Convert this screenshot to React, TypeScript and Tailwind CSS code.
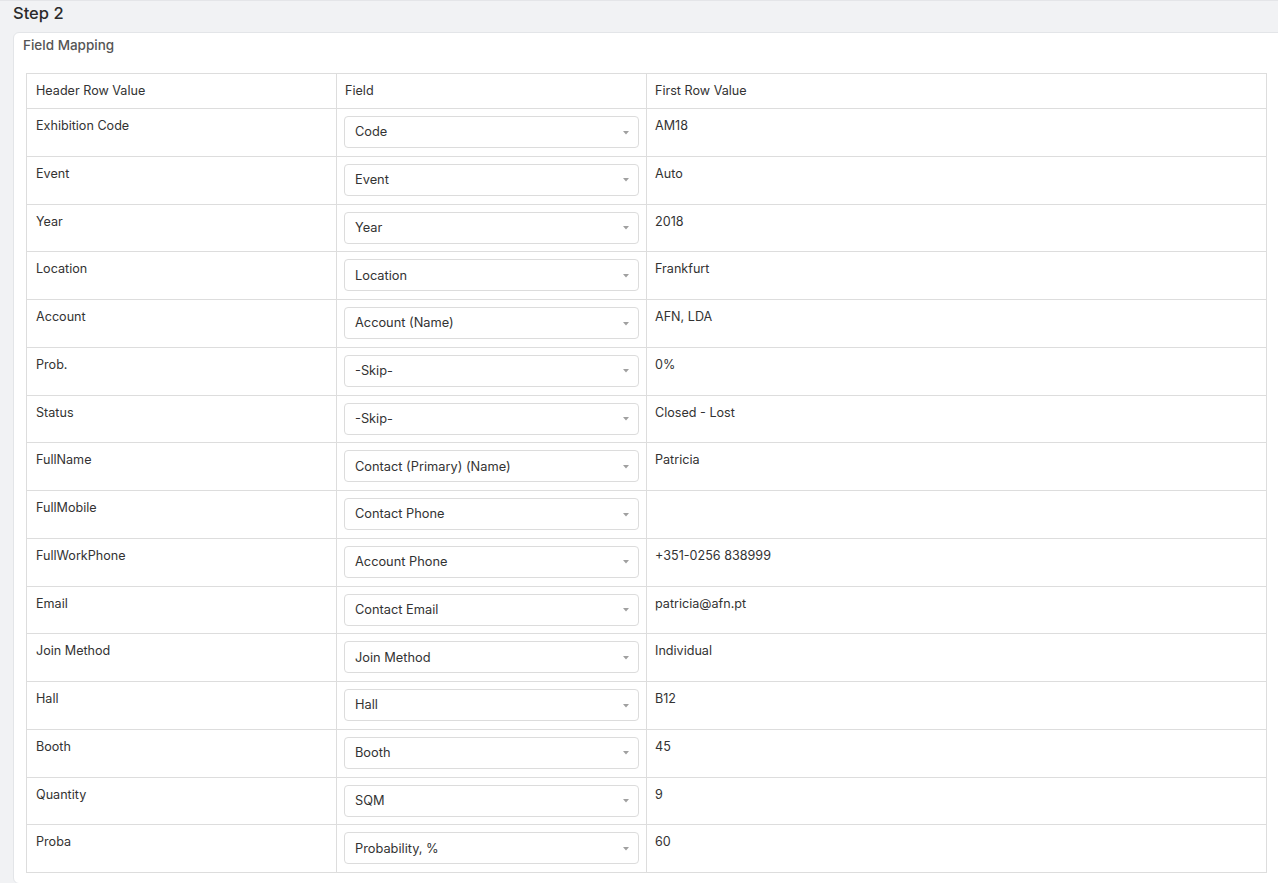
import React from "react";

const rows: [string, string, string][] = [
  ["Exhibition Code", "Code", "AM18"],
  ["Event", "Event", "Auto"],
  ["Year", "Year", "2018"],
  ["Location", "Location", "Frankfurt"],
  ["Account", "Account (Name)", "AFN, LDA"],
  ["Prob.", "-Skip-", "0%"],
  ["Status", "-Skip-", "Closed - Lost"],
  ["FullName", "Contact (Primary) (Name)", "Patricia"],
  ["FullMobile", "Contact Phone", ""],
  ["FullWorkPhone", "Account Phone", "+351-0256 838999"],
  ["Email", "Contact Email", "patricia@afn.pt"],
  ["Join Method", "Join Method", "Individual"],
  ["Hall", "Hall", "B12"],
  ["Booth", "Booth", "45"],
  ["Quantity", "SQM", "9"],
  ["Proba", "Probability, %", "60"],
];

function Select({ value }: { value: string }) {
  return (
    <div className="flex h-[32px] w-full items-center justify-between rounded-[4px] border border-[#dcdcdc] bg-white pl-[10px] pr-[9px] text-[12.8px] text-[#333]">
      <span>{value}</span>
      <svg width="6" height="4" viewBox="0 0 6 4" className="mt-[1px]">
        <path d="M0 0 L6 0 L3 3.5 Z" fill="#a0a0a0" />
      </svg>
    </div>
  );
}

export default function App() {
  return (
    <div
      className="min-h-[883px] w-[1278px] overflow-hidden border-t border-[#e4e5e8] bg-[#f1f2f4] text-[#333]"
      style={{ fontFamily: "Inter, 'Noto Sans', sans-serif" }}
    >
      <div className="h-[31px] pl-[13px] text-[16.5px] font-medium leading-[25px] text-[#2b2b2b]">
        Step 2
      </div>
      <div className="ml-[13px] w-[1266px] rounded-tl-[6px] rounded-bl-[6px] border border-[#e3e5e8] bg-white pb-[10px] pl-[9px]">
        <div className="pt-[2px] text-[13.5px] font-medium leading-[20px] text-[#555]">
          Field Mapping
        </div>
        <div className="ml-[3px] mt-[18px] w-[1241px] border-l border-t border-[#dddddd] text-[12.6px]">
          <div className="grid grid-cols-[310px_310px_620px]">
            <div className="flex h-[35px] items-center border-b border-r border-[#dddddd] pl-[9px]">
              Header Row Value
            </div>
            <div className="flex h-[35px] items-center border-b border-r border-[#dddddd] pl-[8px]">
              Field
            </div>
            <div className="flex h-[35px] items-center border-b border-r border-[#dddddd] pl-[8px]">
              First Row Value
            </div>
            {rows.map(([h, f, v], i) => (
              <React.Fragment key={i}>
                <div className="h-[47.75px] border-b border-r border-[#dddddd] pl-[9px] pt-[8px] leading-[18px]">
                  {h}
                </div>
                <div className="h-[47.75px] border-b border-r border-[#dddddd] px-[7px] pt-[7px]">
                  <Select value={f} />
                </div>
                <div className="h-[47.75px] border-b border-r border-[#dddddd] pl-[8px] pt-[8px] leading-[18px]">
                  {v}
                </div>
              </React.Fragment>
            ))}
          </div>
        </div>
      </div>
    </div>
  );
}
